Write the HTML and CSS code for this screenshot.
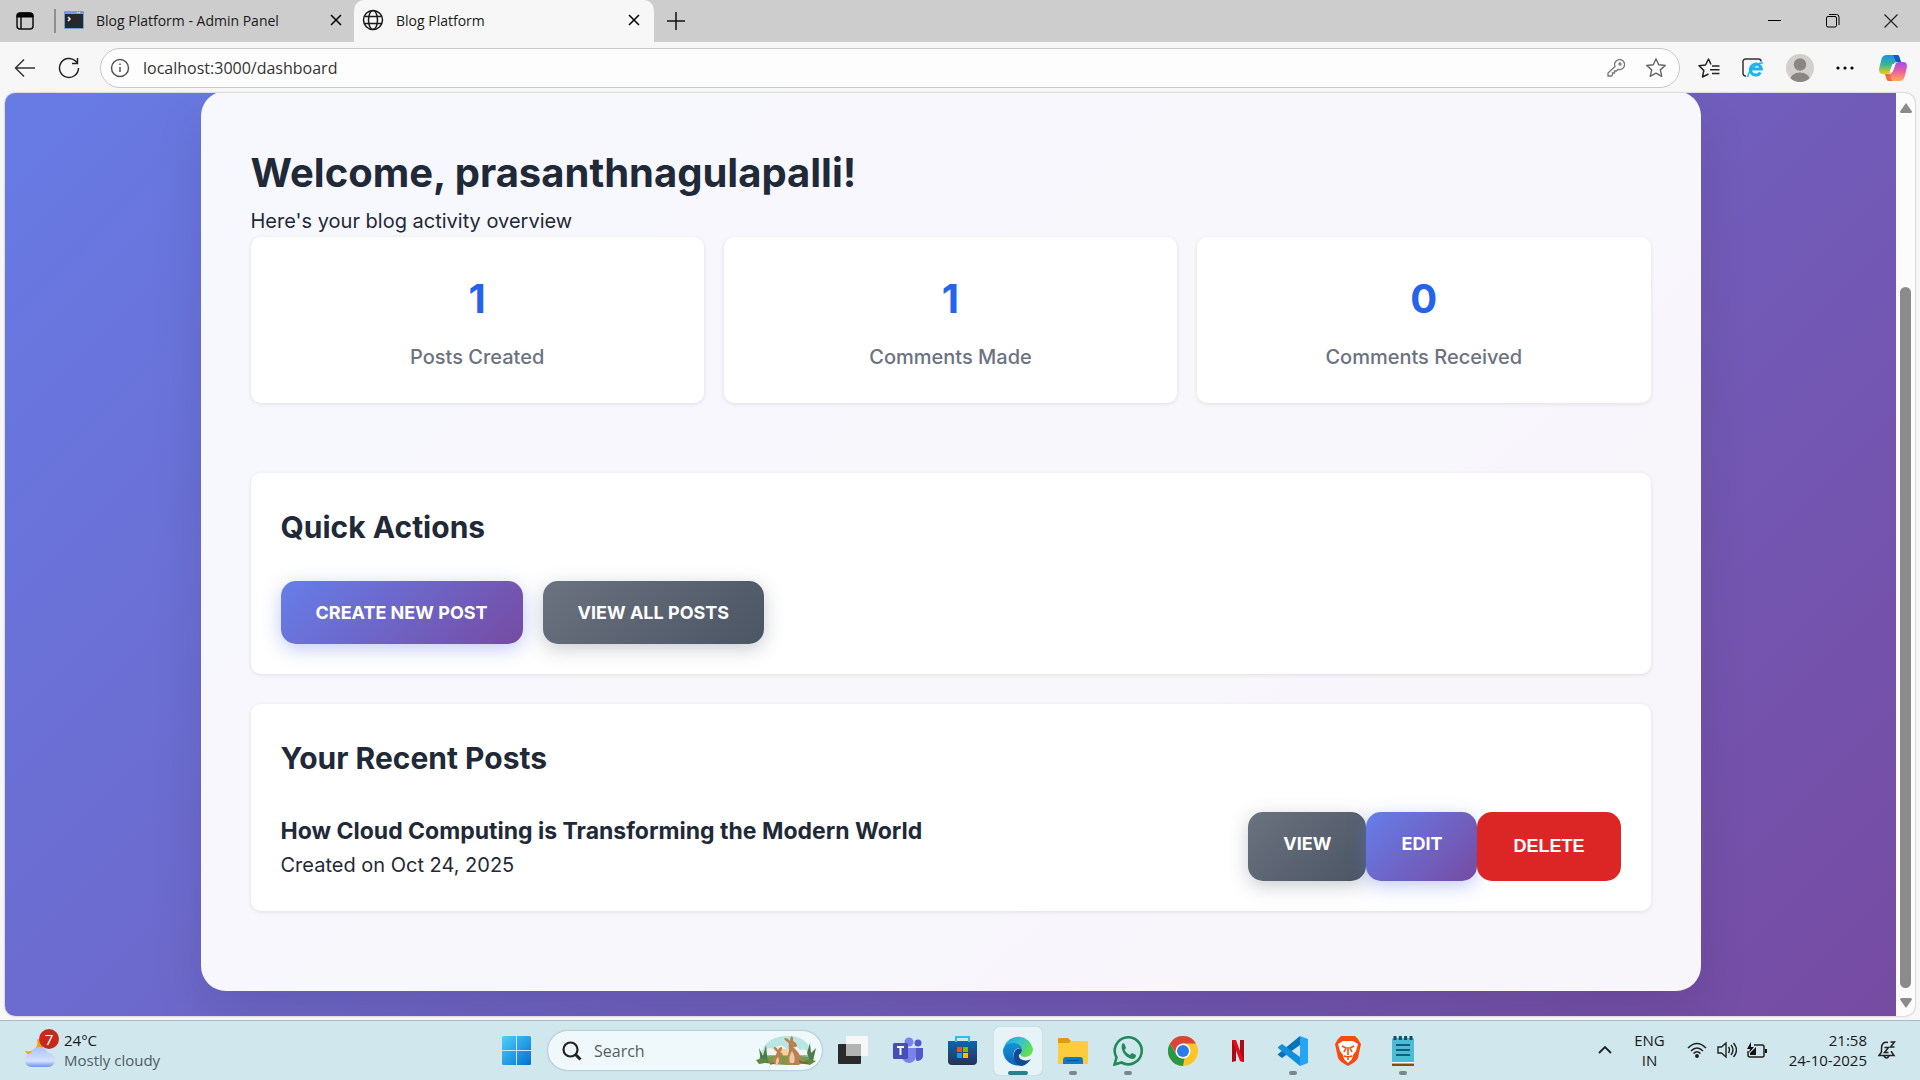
FILE: index.html
```
<!DOCTYPE html>
<html lang="en">
<head>
<meta charset="utf-8">
<title>Blog Platform</title>
<link rel="stylesheet" href="styles.css">
</head>
<body>
<div class="desktop">
  <header class="tabbar">
    <button class="icon-btn workspaces" aria-label="Workspaces">
      <svg width="18" height="18" viewBox="0 0 18 18"><rect x="1" y="1" width="16" height="16" rx="3" fill="none" stroke="#111" stroke-width="1.500"/><path d="M1 5V4a3 3 0 0 1 3-3h10a3 3 0 0 1 3 3v1z" fill="#000" stroke="#000"/><path d="M5 5v12" stroke="#111" stroke-width="1.500"/></svg>
    </button>
    <span class="divider"></span>
    <div class="tab">
      <svg width="20" height="18" viewBox="0 0 20 18"><rect width="20" height="18" rx="1" fill="#6f9fe0"/><path d="M1 3h18v14H1z" fill="#26292c"/><path d="M13 1.500h1M15 1.500h1" stroke="#fff"/><path d="M17 1.500h2" stroke="#e2665e"/><path d="M4 6l2 2-2 2" fill="none" stroke="#fff" stroke-width="1.500"/></svg>
      <span class="tab-title">Blog Platform - Admin Panel</span>
      <button class="icon-btn tab-close" aria-label="Close tab"><svg width="12" height="12" viewBox="0 0 12 12"><path d="M1 1l10 10M11 1L1 11" stroke="#000" stroke-width="1.500"/></svg></button>
    </div>
    <div class="tab tab-active">
      <svg width="22" height="22" viewBox="0 0 22 22" fill="none" stroke="#1a1a1a" stroke-width="1.500"><circle cx="11" cy="11" r="9.500"/><ellipse cx="11" cy="11" rx="4.500" ry="9.500"/><path d="M2.500 7.500h17M2.500 14.500h17"/></svg>
      <span class="tab-title">Blog Platform</span>
      <button class="icon-btn tab-close" aria-label="Close tab"><svg width="12" height="12" viewBox="0 0 12 12"><path d="M1 1l10 10M11 1L1 11" stroke="#000" stroke-width="1.500"/></svg></button>
    </div>
    <button class="icon-btn new-tab" aria-label="New tab"><svg width="18" height="18" viewBox="0 0 18 18"><path d="M9 0v18M0 9h18" stroke="#111" stroke-width="1.500"/></svg></button>
    <div class="window-controls">
      <button class="icon-btn" aria-label="Minimize"><svg width="14" height="14" viewBox="0 0 14 14"><path d="M0 6.500h13" stroke="#000"/></svg></button>
      <button class="icon-btn" aria-label="Restore"><svg width="14" height="14" viewBox="0 0 14 14" fill="none" stroke="#000"><rect x=".5" y="2.500" width="10" height="10.500" rx="1.500"/><path d="M3 .5h7.500a2.500 2.500 0 0 1 2.500 2.500v8"/></svg></button>
      <button class="icon-btn" aria-label="Close"><svg width="14" height="14" viewBox="0 0 14 14"><path d="M.5.5l13 13M13.500.5l-13 13" stroke="#222" stroke-width="1.200"/></svg></button>
    </div>
  </header>

  <nav class="toolbar">
    <button class="icon-btn" aria-label="Back"><svg width="22" height="20" viewBox="0 0 22 20" fill="none" stroke="#333" stroke-width="1.500"><path d="M21 10H1.500M10 1.500L1.500 10l8.500 8.500"/></svg></button>
    <button class="icon-btn" aria-label="Refresh"><svg width="22" height="22" viewBox="0 0 22 22" fill="none" stroke="#222" stroke-width="1.500"><path d="M20.500 11a9.500 9.500 0 1 1-3-7l2 2M19.500 1v5.500H14"/></svg></button>
    <div class="address">
      <svg width="20" height="20" viewBox="0 0 20 20" fill="none" stroke="#555" stroke-width="1.500"><circle cx="10" cy="10" r="8.500"/><path d="M10 9v5M10 5.500v1.500"/></svg>
      <input class="address-input" type="text" value="localhost:3000/dashboard" aria-label="Address">
      <button class="icon-btn" aria-label="Passwords"><svg width="18" height="18" viewBox="0 0 18 18" fill="none" stroke="#777" stroke-width="1.300"><path d="M8 7.500A5 5 0 1 1 11 10.300L9.500 12H7.500v2H5.500v2L4.500 17H1v-3z"/><circle cx="13" cy="5" r="1"/></svg></button>
      <button class="icon-btn" aria-label="Favorite this page"><svg width="22" height="22" viewBox="0 0 22 22" fill="none" stroke="#666" stroke-width="1.400" stroke-linejoin="round"><path d="M11 1.800l2.700 6 6.600.7-5 4.400 1.500 6.500L11 16.200l-5.800 3.200 1.500-6.500-5-4.400 6.600-.7z"/></svg></button>
    </div>
    <button class="icon-btn" aria-label="Favorites"><svg width="22" height="22" viewBox="0 0 22 22" fill="none" stroke="#222" stroke-width="1.500" stroke-linejoin="round"><path d="M13 7.500L10.500 2 7.500 8 1 8.800l4.800 4.600L4.500 20l6-3M14 9h7.500M12 12.700h9.500M14 16.500h7.500"/></svg></button>
    <button class="icon-btn" aria-label="Internet Explorer mode"><svg width="22" height="22" viewBox="0 0 22 22" fill="none"><path d="M4 19H3.500A2.500 2.500 0 0 1 1 16.500v-12A2.500 2.500 0 0 1 3.500 2h13A2.500 2.500 0 0 1 19 4.500" stroke="#333" stroke-width="1.500"/><path d="M18.500 15.500a5.500 5.500 0 1 1 .8-3.500H9" stroke="#1eb4ea" stroke-width="3"/><path d="M6 20c-1-3 8-15 15-14" stroke="#1eb4ea" stroke-width="1.500"/></svg></button>
    <button class="icon-btn" aria-label="Profile"><svg width="28" height="28" viewBox="0 0 28 28"><defs><clipPath id="pf"><circle cx="14" cy="14" r="14"/></clipPath></defs><g clip-path="url(#pf)"><path d="M0 0h28v28H0z" fill="#d2d0cd"/><circle cx="14" cy="10.500" r="6.200" fill="#8a8684"/><ellipse cx="14" cy="26" rx="10" ry="7.500" fill="#8a8684"/></g></svg></button>
    <button class="icon-btn" aria-label="Settings and more"><svg width="18" height="4" viewBox="0 0 18 4"><circle cx="2" cy="2" r="1.600"/><circle cx="9" cy="2" r="1.600"/><circle cx="16" cy="2" r="1.600"/></svg></button>
    <button class="icon-btn copilot" aria-label="Copilot"><svg width="28" height="26" viewBox="0 0 28 26"><defs><linearGradient id="ca" x1="0" y1="0" x2="0" y2="1"><stop offset="0" stop-color="#1e8fe8"/><stop offset=".5" stop-color="#35b795"/><stop offset="1" stop-color="#f2cb10"/></linearGradient><linearGradient id="cb" x1="0" y1="0" x2="0" y2="1"><stop offset="0" stop-color="#a04df0"/><stop offset=".5" stop-color="#ee5f9c"/><stop offset="1" stop-color="#ffac55"/></linearGradient></defs><path d="M14 0h4c2 0 2.500 2 3 4l1 3h-4c-3 0-4 3-6 9-.7 2-2 3-4 3H4c-4 0-4.500-3-3.500-7l2-8C3.500 1 5 0 8 0z" fill="url(#ca)"/><path d="M14 26h-4c-2 0-2.500-2-3-4l-1-3h4c3 0 4-3 6-9 .7-2 2-3 4-3h4c4 0 4.500 3 3.500 7l-2 8c-1 3-2.500 4-5.500 4z" fill="url(#cb)"/><path d="M14 0h4c2 0 2.500 2 3 4l1 3h-4c-2 0-3-7-4-7z" fill="#1456c8"/><path d="M14 26h-4c-2 0-2.500-2-3-4l-1-3h4c2 0 2 7 4 7z" fill="#f36b43"/><path d="M13.500 9h3l-3 8h-3z" fill="#fff"/></svg></button>
  </nav>

  <div class="viewport">
    <main class="page">
      <div class="container">
        <h1 class="title">Welcome, prasanthnagulapalli!</h1>
        <p class="subtitle">Here's your blog activity overview</p>
        <section class="stats">
          <div class="card stat"><div class="stat-number">1</div><div class="stat-label">Posts Created</div></div>
          <div class="card stat"><div class="stat-number">1</div><div class="stat-label">Comments Made</div></div>
          <div class="card stat"><div class="stat-number">0</div><div class="stat-label">Comments Received</div></div>
        </section>
        <section class="card panel">
          <h2 class="panel-title">Quick Actions</h2>
          <div class="actions">
            <a class="btn btn-primary" href="#create">Create New Post</a>
            <a class="btn btn-secondary" href="#posts">View All Posts</a>
          </div>
        </section>
        <section class="card panel">
          <h2 class="panel-title">Your Recent Posts</h2>
          <article class="post">
            <div>
              <h3 class="post-title">How Cloud Computing is Transforming the Modern World</h3>
              <p class="post-date">Created on Oct 24, 2025</p>
            </div>
            <div class="post-actions">
              <a class="btn btn-secondary" href="#view">View</a>
              <a class="btn btn-primary" href="#edit">Edit</a>
              <button class="btn btn-danger" type="button">Delete</button>
            </div>
          </article>
        </section>
      </div>
    </main>
    <div class="scrollbar">
      <svg width="12" height="10" viewBox="0 0 12 10"><path d="M6 0l6 8.500q0 1.500-1.500 1.500h-9Q0 10 0 8.500z" fill="#8b8b8b"/></svg>
      <div class="scroll-track"><div class="scroll-thumb"></div></div>
      <svg width="12" height="10" viewBox="0 0 12 10"><path d="M6 10l6-8.500Q12 0 10.500 0h-9Q0 0 0 1.500z" fill="#8b8b8b"/></svg>
    </div>
  </div>

  <footer class="taskbar">
    <button class="weather">
      <span class="weather-icon">
        <svg width="32" height="30" viewBox="0 0 32 30"><defs><linearGradient id="cl" x1="0" y1="0" x2="0" y2="1"><stop offset="0" stop-color="#a9c3f5"/><stop offset=".7" stop-color="#d5e3fb"/><stop offset="1" stop-color="#6f93e8"/></linearGradient></defs><path d="M13 1c2 8-3 14-12 12 3 6 14 8 18 1V3z" fill="#f3a01c"/><path d="M8 29a7 7 0 0 1-1-14 9 9 0 0 1 17 0 7 7 0 0 1 0 14z" fill="url(#cl)"/></svg>
        <span class="badge">7</span>
      </span>
      <span class="weather-text"><span>24°C</span><span class="muted">Mostly cloudy</span></span>
    </button>
    <div class="apps">
      <button class="app" aria-label="Start"><svg width="30" height="30" viewBox="0 0 30 30"><defs><linearGradient id="wn" x1="0" y1="0" x2="1" y2="1"><stop offset="0" stop-color="#4fd0fb"/><stop offset="1" stop-color="#0070cf"/></linearGradient></defs><path d="M1.500 0H14v14H0V1.500Q0 0 1.500 0zM15 0h12.500Q29 0 29 1.500V14H15zM0 15h14v14H1.500Q0 29 0 27.500zM15 15h14v12.500q0 1.500-1.500 1.500H15z" fill="url(#wn)"/></svg></button>
      <label class="search">
        <svg width="20" height="20" viewBox="0 0 20 20" fill="none" stroke="#222" stroke-width="2.200"><circle cx="8.500" cy="8.500" r="7"/><path d="M13.500 13.500l5 5" stroke-width="3"/></svg>
        <input class="search-input" type="text" placeholder="Search">
        <svg width="60" height="32" viewBox="0 0 60 32"><defs><clipPath id="kg"><path d="M3 27C5 10 14 1 31 1s25 8 26 26q-26 6-54 0z"/></clipPath></defs><g clip-path="url(#kg)"><path d="M0 0h60v22H0z" fill="#b9e6e3"/><path d="M8 22c0-8 6-11 10-7 5-8 12-4 13 2 4-6 9-7 13-2 5-2 9 2 9 7z" fill="#f7f3ea"/><path d="M0 20h60v3H0z" fill="#86b9d6"/><circle cx="28" cy="18" r="4" fill="#f7cf9a"/><path d="M0 23q28-5 60 0v9H0z" fill="#7a9a46"/></g><path d="M5 28L3 13l4 8 3-11 1 10 1 8zM55 28l-4-10 3-10 1 10 5-5-3 13z" fill="#4e7b4b"/><path d="M0 25q8-4 15 2L3 29zM46 28q5-6 14-2l-6 4z" fill="#5d8b3a"/><path d="M33 9q-1-2-3-3-3-3-1-3 3 0 5 3 0-4 2-5 2 2 1 5 4 2 4 5-2 2-4 1 6 5 8 11 1 5-2 7H32q-3-5 0-10l1-6q-1-3 0-5zM21 17q-4-3-3-5 3 0 4 3 1-3 4-3 1 3-2 5 3 1 3 4l-3 1q3 3 1 7h-7q-3-4 1-7 1-3 2-5z" fill="#b98052"/><path d="M36 16q4 6 2 12h-4q-2-6 2-12zM22 22q2 3 0 7h-2q-1-4 2-7z" fill="#e8cba4"/><path d="M43 26q5 3 9 2M18 28l-4 1" fill="none" stroke="#8e5b36" stroke-width="1.800"/></svg>
      </label>
      <button class="app" aria-label="Task view"><svg width="30" height="30" viewBox="0 0 30 30"><rect y="8" width="23" height="20" rx="1" fill="#2a2a2a"/><rect x="8" width="22" height="20" rx="1" fill="#f6f6f6"/><path d="M8 8h15v12H8z" fill="#b2b3b3"/></svg></button>
      <button class="app" aria-label="Teams"><svg width="30" height="28" viewBox="0 0 30 28"><circle cx="25" cy="6" r="3.500" fill="#5059c9"/><circle cx="16" cy="5" r="4.500" fill="#7b83eb"/><path d="M22 11h8v8a5 5 0 0 1-7 4.500z" fill="#5059c9"/><path d="M9 11h14v8a7 7 0 0 1-14 0z" fill="#7b83eb"/><rect y="6" width="15" height="16" rx="1.500" fill="#464eb8"/><path d="M4 10h7M7.500 10v8" stroke="#fff" stroke-width="2"/></svg></button>
      <button class="app" aria-label="Microsoft Store"><svg width="30" height="30" viewBox="0 0 30 30"><defs><linearGradient id="st" x1="0" y1="0" x2="0" y2="1"><stop offset="0" stop-color="#0e64b0"/><stop offset="1" stop-color="#263356"/></linearGradient></defs><path d="M0 5h29v20a4 4 0 0 1-4 4H4a4 4 0 0 1-4-4z" fill="url(#st)"/><path d="M8 6V1h13v5" fill="none" stroke="#26c0f2" stroke-width="2"/><path d="M9 11h5v5H9z" fill="#f25022"/><path d="M15 11h5v5h-5z" fill="#7fba00"/><path d="M9 17h5v5H9z" fill="#00a4ef"/><path d="M15 17h5v5h-5z" fill="#ffb900"/></svg></button>
      <button class="app app-current" aria-label="Edge"><svg width="30" height="30" viewBox="0 0 30 30"><defs><linearGradient id="ea" x1="0" y1="0" x2="1" y2=".6"><stop offset="0" stop-color="#1b9fe0"/><stop offset=".5" stop-color="#33c4cf"/><stop offset="1" stop-color="#65e04a"/></linearGradient><linearGradient id="eb" x1="0" y1="0" x2="0" y2="1"><stop offset="0" stop-color="#1492d8"/><stop offset="1" stop-color="#0f63bb"/></linearGradient></defs><path d="M1 11A15 15 0 0 1 30 13c0 5-4 8-8 8-3 0-5-1-5-3 0-1 2-2 2-4 0-3-4-5-8-5S3 9 1 11z" fill="url(#ea)"/><path d="M0 15c0-5 5-8 10-8 6 0 9 4 9 7-1-2-6-3-8 2-2 6 2 12 8 13A15 15 0 0 1 0 15z" fill="url(#eb)"/><path d="M19 14c-1-2-5-2-7 1-4 7 1 15 7 15 4-1 7-4 9-7-8 4-13-1-12-4 1-1 3-3 3-5z" fill="#124a93"/></svg></button>
      <button class="app app-open" aria-label="File Explorer"><svg width="30" height="28" viewBox="0 0 30 28"><path d="M0 2q0-1 1-1h9l3 3h16v8H0z" fill="#dd9c08"/><path d="M0 6h11l2-2h16q1 0 1 1v22H0z" fill="#fdcb3e"/><path d="M5 27v-4q0-3 3-3h14q3 0 3 3v4z" fill="#1278cf"/><path d="M9 23.500h12" stroke="#0a4c8c"/></svg></button>
      <button class="app app-open" aria-label="WhatsApp"><svg width="30" height="30" viewBox="0 0 30 30"><path d="M1.500 28.500l2-7a13.500 13.500 0 1 1 5 5z" fill="none" stroke="#1f8b56" stroke-width="2.600"/><path d="M9 8q2-2 3 1l1 3-1.500 2q2 3.500 5.500 5l2-2 4 2q0 4-4 4C13 22 7 15 9 8z" fill="#1f8b56"/></svg></button>
      <button class="app" aria-label="Chrome"><svg width="30" height="30" viewBox="0 0 30 30"><circle cx="15" cy="15" r="15" fill="#fdc526"/><path d="M2 7.500A15 15 0 0 1 28 7.500H15L9 19z" fill="#db4437"/><path d="M2 7.500L8.500 19q3 4 8 3.500L15 30A15 15 0 0 1 2 7.500z" fill="#2a9648"/><circle cx="15" cy="15" r="7.500" fill="#fff"/><circle cx="15" cy="15" r="6" fill="#2b7bea"/></svg></button>
      <button class="app" aria-label="Netflix"><svg width="12" height="22" viewBox="0 0 12 22"><path d="M0 0h4v21l-4 1zM8 0h4v22l-4-1z" fill="#a90c14"/><path d="M0 0h4l8 22-4-1z" fill="#e80a16"/></svg></button>
      <button class="app app-open" aria-label="Visual Studio Code"><svg width="30" height="30" viewBox="0 0 30 30"><path d="M22 0l8 3v24l-8 3z" fill="#25a5f4"/><path d="M22 0v9L4 22l-4-3v-1z" fill="#0872bd"/><path d="M22 30v-9L4 8 0 11v1z" fill="#1390dc"/></svg></button>
      <button class="app" aria-label="Brave"><svg width="26" height="30" viewBox="0 0 26 30"><path d="M6 0h14l3 3 3 5-3 14q-2 4-10 8Q5 26 3 22L0 8l3-5z" fill="#fb4a0c"/><path d="M8 5h10l5 3-2 7-3 4-1 4-4 4-4-4-1-4-3-4-2-7z" fill="#fff"/><path d="M7 10l4 2-2 4M19 10l-4 2 2 4M13 11v8M9 20l4 1 4-1M13 20v4" fill="none" stroke="#fb4a0c" stroke-width="1.600"/></svg></button>
      <button class="app app-open" aria-label="Notepad"><svg width="24" height="30" viewBox="0 0 24 30"><rect x="1" y="2" width="22" height="25" rx="1.500" fill="#4dbad6"/><path d="M1 27h22v3H1z" fill="#8a4a14"/><path d="M1 26h22v1.500H1z" fill="#fff"/><path d="M4 0v4M9.300 0v4M14.600 0v4M20 0v4" stroke="#124f66" stroke-width="3"/><path d="M5 9h14M5 14h14M5 19h14" stroke="#0e5f7c" stroke-width="1.800"/></svg></button>
    </div>
    <div class="tray">
      <button class="icon-btn" aria-label="Show hidden icons"><svg width="14" height="8" viewBox="0 0 14 8" fill="none" stroke="#222" stroke-width="1.800"><path d="M1 7l6-6 6 6"/></svg></button>
      <button class="tray-text lang"><span>ENG</span><span>IN</span></button>
      <button class="icon-btn status" aria-label="Network, volume and battery">
        <svg width="20" height="16" viewBox="0 0 20 16" fill="none" stroke="#222" stroke-width="1.500"><path d="M1 6q9-9 18 0M4 9q6-6 12 0M6.500 11.500q3.500-3.500 7 0"/><circle cx="10" cy="14" r="1.200" fill="#222"/></svg>
        <svg width="20" height="18" viewBox="0 0 20 18" fill="none" stroke="#222" stroke-width="1.400"><path d="M1 6h3.500L9 2v14l-4.500-4H1zM11.500 6q2 3 0 6M14 4q4 5 0 10M16.500 2q6 7 0 14"/></svg>
        <svg width="20" height="16" viewBox="0 0 20 16"><path d="M7 3h8.500Q17 3 17 5v8q0 2-1.500 2H3q-2 0-2-2V9" fill="none" stroke="#222" stroke-width="1.500"/><path d="M18 7h2v4h-2zM3 13v-2l6-6v8zM4 0L0 7h3L2 11l5-6H4z" fill="#111"/></svg>
      </button>
      <div class="clock-group">
        <button class="tray-text clock"><span>21:58</span><span>24-10-2025</span></button>
        <button class="icon-btn" aria-label="Notifications"><svg width="18" height="18" viewBox="0 0 18 18" fill="none" stroke="#222" stroke-width="1.500"><path d="M10 1.500Q4 0 3.500 7v4L1 14.500h15L13.500 11v-1M6 15q2.500 4 5 0M6.500 6.500h4l-4 5h4M12.500 1h4l-4 5h4"/></svg></button>
      </div>
    </div>
  </footer>
</div>
</body>
</html>
```
FILE: styles.css
```
* {
  box-sizing: border-box;
}

body {
  margin: 0;
  font-family: "Open Sans", "Noto Sans", sans-serif;
  color: #1a1a1a;
}

h1, h2, h3, p {
  margin: 0;
}

button, input {
  font: inherit;
  color: inherit;
}

svg {
  display: block;
  flex: none;
}

.desktop {
  display: flex;
  flex-direction: column;
  height: 100vh;
  min-width: 1280px;
  overflow: hidden;
  background: #f7f7f7;
}

.icon-btn {
  display: flex;
  align-items: center;
  justify-content: center;
  padding: 0;
  border: 0;
  background: none;
}

/* Browser tab strip */
.tabbar {
  display: flex;
  align-items: center;
  height: 42px;
  flex: none;
  background: #cdcdcd;
}

.workspaces {
  width: 54px;
  padding-right: 4px;
}

.divider {
  width: 2px;
  height: 24px;
  background: #8f8f8f;
}

.tab {
  display: flex;
  align-items: center;
  gap: 12px;
  width: 298px;
  height: 42px;
  padding: 0 12px 2px 8px;
  font-size: 14px;
}

.tab-active {
  width: 300px;
  padding-right: 14px;
  border-radius: 10px 10px 0 0;
  background: #f7f7f7;
}

.tab-title {
  flex: 1;
}

.new-tab {
  width: 44px;
  height: 38px;
}

.window-controls {
  display: flex;
  gap: 44px;
  margin-left: auto;
  padding-right: 22px;
}

/* Address row */
.toolbar {
  display: flex;
  align-items: center;
  gap: 22px;
  height: 51px;
  flex: none;
  padding: 0 13px 0 14px;
}

.address {
  display: flex;
  align-items: center;
  gap: 20px;
  flex: 1;
  height: 40px;
  margin: 0 -4px 0 -2px;
  padding: 0 12px 0 9px;
  border: 1px solid #c8c8c8;
  border-radius: 20px;
  background: #fdfdfd;
}

.address-input {
  flex: 1;
  min-width: 0;
  padding: 0;
  margin-left: -7px;
  border: 0;
  outline: 0;
  background: none;
  font-size: 16px;
  color: #333;
}

.copilot {
  margin-left: 3px;
}

/* Page area */
.viewport {
  display: flex;
  flex: 1;
  min-height: 0;
  margin: 0 5px 4px;
  overflow: hidden;
  border-radius: 10px;
  background: #fcfcfc;
  box-shadow: 0 0 2px #999;
}

.page {
  flex: 1;
  display: flex;
  justify-content: center;
  align-items: flex-end;
  padding: 0 25px 25px;
  overflow: hidden;
  background: linear-gradient(135deg, #677be5, #764ba2);
  font-family: Inter, sans-serif;
  font-size: 20px;
  line-height: 32px;
  color: #1f2937;
}

.container {
  width: 100%;
  max-width: 1500px;
  padding: 50px 50px 80px;
  border-radius: 25px;
  background: rgba(255, 255, 255, 0.95);
  box-shadow: 0 25px 50px rgba(0, 0, 0, 0.1);
}

.title {
  font-size: 40px;
  font-weight: 700;
  line-height: 64px;
}

.stats {
  display: grid;
  grid-template-columns: repeat(3, 1fr);
  gap: 20px;
  margin-bottom: 70px;
}

.card {
  border-radius: 10px;
  background: #fff;
  box-shadow: 0 1px 4px rgba(0, 0, 0, 0.1);
}

.stat {
  padding: 30px;
  text-align: center;
}

.stat-number {
  margin-bottom: 10px;
  font-size: 40px;
  font-weight: 700;
  line-height: 64px;
  color: #2563eb;
}

.stat-label {
  font-weight: 500;
  color: #6b7280;
}

.panel {
  padding: 30px;
}

.panel + .panel {
  margin-top: 30px;
}

.panel-title {
  margin-bottom: 30px;
  font-size: 30px;
  font-weight: 700;
  line-height: 48px;
}

.actions {
  display: flex;
  gap: 20px;
}

.btn {
  padding: 17px 35px;
  border: 0;
  border-radius: 15px;
  font-size: 18px;
  font-weight: 700;
  line-height: 29px;
  text-transform: uppercase;
  text-decoration: none;
  color: #fff;
}

.btn-primary {
  background: linear-gradient(135deg, #667eea, #764ba2);
  box-shadow: 0 5px 19px rgba(102, 126, 234, 0.4);
}

.btn-secondary {
  background: linear-gradient(135deg, #6b7280, #4b5563);
  box-shadow: 0 5px 19px rgba(75, 85, 99, 0.3);
}

.btn-danger {
  padding: 20px 36px;
  background: #dc2626;
  font-family: "Liberation Sans", Arial, sans-serif;
}

.post {
  display: flex;
  align-items: center;
  justify-content: space-between;
}

.post-title {
  font-size: 23px;
  font-weight: 700;
  line-height: 36px;
}

.post-actions {
  display: flex;
}

.scrollbar {
  display: flex;
  flex-direction: column;
  align-items: center;
  width: 19px;
  padding: 10px 0 8px;
}

.scroll-track {
  display: flex;
  flex: 1;
  flex-direction: column;
  justify-content: flex-end;
  padding: 10px 0;
}

.scroll-thumb {
  width: 11px;
  height: 81%;
  border-radius: 6px;
  background: #8b8b8b;
}

/* Windows taskbar */
.taskbar {
  display: grid;
  grid-template-columns: 1fr auto 1fr;
  align-items: center;
  height: 60px;
  flex: none;
  padding: 0 24px;
  border-top: 1px solid #a9b9c2;
  background: #cfe7ed;
}

.weather {
  display: flex;
  gap: 8px;
  padding: 0 0 2px;
  border: 0;
  background: none;
  font-size: 15px;
  line-height: 20px;
  text-align: left;
}

.weather-icon {
  position: relative;
  padding-top: 8px;
}

.badge {
  position: absolute;
  top: -1px;
  left: 15px;
  width: 20px;
  border-radius: 10px;
  background: #c42b1c;
  color: #fff;
  text-align: center;
}

.weather-text {
  display: flex;
  flex-direction: column;
}

.muted {
  color: #4f5d62;
}

.apps {
  display: flex;
  align-items: center;
  gap: 7px;
}

.app {
  display: flex;
  position: relative;
  align-items: center;
  justify-content: center;
  width: 48px;
  height: 48px;
  padding: 0;
  border: 0;
  border-radius: 5px;
  background: none;
}

.app-current {
  background: #e6f3f7;
  box-shadow: 0 0 1px #8fa5ad;
}

.app-open::after,
.app-current::after {
  content: "";
  position: absolute;
  bottom: 0;
  width: 8px;
  height: 4px;
  border-radius: 2px;
  background: #7a878c;
}

.app-current::after {
  width: 20px;
  background: #26808f;
}

.search {
  display: flex;
  align-items: center;
  gap: 12px;
  width: 274px;
  height: 39px;
  padding: 0 6px 0 14px;
  border-radius: 20px;
  background: #eff8fa;
  box-shadow: 0 0 2px #7f979f;
}

.search-input {
  flex: 1;
  min-width: 0;
  padding: 0;
  border: 0;
  outline: 0;
  background: none;
  font-size: 16px;
}

.search-input::placeholder {
  color: #555e62;
}

.tray {
  display: flex;
  align-items: center;
  justify-content: flex-end;
  gap: 22px;
  padding-bottom: 2px;
}

.status {
  gap: 10px;
}

.clock-group {
  display: flex;
  align-items: center;
  gap: 11px;
}

.tray-text {
  display: flex;
  flex-direction: column;
  padding: 0;
  border: 0;
  background: none;
  font-size: 15px;
  line-height: 20px;
}

.lang {
  align-items: center;
}

.clock {
  align-items: flex-end;
}
```
